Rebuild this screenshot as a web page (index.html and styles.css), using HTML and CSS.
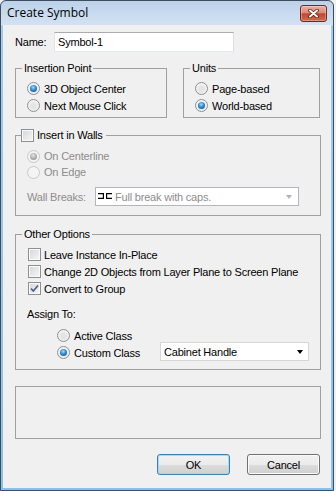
FILE: index.html
```html
<!DOCTYPE html>
<html>
<head>
<meta charset="utf-8">
<meta name="viewport" content="width=device-width, initial-scale=1">
<link rel="stylesheet" href="styles.css">
</head>
<body>
<div class="window">
  <div class="titlebar">
    <span class="title">Create Symbol</span>
    <div class="close">
      <svg width="11" height="9" viewBox="0 0 11 9">
        <path d="M2 1.5 L9 7.5 M9 1.5 L2 7.5" stroke="#5b1d14" stroke-width="3.6" stroke-linecap="round"/>
        <path d="M2 1.5 L9 7.5 M9 1.5 L2 7.5" stroke="#ffffff" stroke-width="2" stroke-linecap="round"/>
      </svg>
    </div>
  </div>

  <div class="client">
    <div class="name-row">
      <span class="name-label">Name:</span>
      <div class="textbox">Symbol-1</div>
    </div>

    <div class="top-groups">
      <fieldset class="group insertion">
        <legend>Insertion Point</legend>
        <div class="option"><span class="radio on"></span>3D Object Center</div>
        <div class="option"><span class="radio"></span>Next Mouse Click</div>
      </fieldset>
      <fieldset class="group units">
        <legend>Units</legend>
        <div class="option"><span class="radio"></span>Page-based</div>
        <div class="option"><span class="radio on"></span>World-based</div>
      </fieldset>
    </div>

    <fieldset class="group walls">
      <legend class="check-legend"><span class="check"></span>Insert in Walls</legend>
      <div class="option disabled short"><span class="radio on"></span>On Centerline</div>
      <div class="option disabled short"><span class="radio"></span>On Edge</div>
      <div class="breaks-row">
        <span class="breaks-label">Wall Breaks:</span>
        <div class="combo combo-disabled">
          <svg class="break-icon" width="14" height="7" viewBox="0 0 14 7">
            <path d="M0 0.6 H5.4 V5.4 H0 M14 0.6 H8.6 V5.4 H14" fill="none" stroke="#000" stroke-width="1.2"/>
          </svg>
          <span class="combo-text">Full break with caps.</span>
          <span class="arrow arrow-gray"></span>
        </div>
      </div>
    </fieldset>

    <fieldset class="group other">
      <legend>Other Options</legend>
      <div class="option boxed"><span class="check"></span>Leave Instance In-Place</div>
      <div class="option boxed"><span class="check"></span>Change 2D Objects from Layer Plane to Screen Plane</div>
      <div class="option boxed"><span class="check checked">
        <svg width="11" height="11" viewBox="0 0 11 11"><path d="M2 5.5 L4.3 8 L9 2.5" fill="none" stroke="#4b5f96" stroke-width="1.7"/></svg>
      </span>Convert to Group</div>
      <div class="assign-label">Assign To:</div>
      <div class="option assign"><span class="radio"></span>Active Class</div>
      <div class="option assign">
        <span class="radio on"></span>
        <span class="class-label">Custom Class</span>
        <div class="combo combo-class">
          <span class="combo-text">Cabinet Handle</span>
          <span class="arrow"></span>
        </div>
      </div>
    </fieldset>

    <div class="empty-box"></div>

    <div class="buttons">
      <div class="btn btn-default">OK</div>
      <div class="btn">Cancel</div>
    </div>
  </div>
</div>
</body>
</html>
```

FILE: styles.css
```css
* {box-sizing: border-box;}

body {
  margin: 0;
  background: #f0f0f0;
  font-family: "Liberation Sans", Arial, sans-serif;
  font-size: 11px;
  color: #000;
}

.window {
  width: 334px;
  height: 491px;
  border: 1px solid #3e4c5b;
  border-radius: 6px 6px 0 0;
  background: linear-gradient(#bcd2ea, #d3e2f2 24px, #9fcdf0 25px, #86c3ee);
  display: flex;
  flex-direction: column;
  overflow: hidden;
}

.titlebar {
  height: 24px;
  display: flex;
  justify-content: space-between;
  align-items: flex-start;
  padding-left: 6px;
}

.title {
  font-family: "Open Sans", "Liberation Sans", sans-serif;
  font-size: 12px;
  line-height: 16px;
  margin-top: 4px;
}

.close {
  width: 27px;
  height: 17px;
  margin: 4px 6px 0 0;
  border: 1px solid #6d2a22;
  border-radius: 3px;
  background: linear-gradient(#eab0a3, #dc8a78 45%, #c4462f 52%, #cf6a50);
  box-shadow: inset 0 0 0 1px rgba(255, 255, 255, 0.3);
  display: flex;
  align-items: center;
  justify-content: center;
}

.client {
  flex: 1;
  margin: 0 2px 2px;
  background: #f0f0f0;
  padding: 7px 10px 0 12px;
  display: flex;
  flex-direction: column;
  letter-spacing: -0.2px;
}

.name-row {
  display: flex;
  align-items: center;
  height: 20px;
}

.name-label {
  width: 39px;
}

.textbox {
  width: 180px;
  height: 20px;
  border: 1px solid;
  border-color: #abadb3 #dbdfe6 #e3e9ef #e2e3ea;
  background: #fff;
  padding-left: 3px;
  display: flex;
  align-items: center;
}

/* group boxes */
.group {
  margin: 0;
  min-width: 0;
  border: 1px solid #a0a0a0;
  padding: 5px 0 3px 6px;
}

.group legend {
  padding: 0 2px;
  line-height: 13px;
}

.top-groups {
  display: flex;
  gap: 16px;
  margin-top: 10px;
}

.insertion {width: 152px;}
.units {width: 137px;}

.option {
  display: flex;
  align-items: center;
  gap: 4px;
  height: 17px;
  margin-left: 5px;
}

.option.short {height: 16px;}
.option.boxed {margin-left: 6px; gap: 3px;}

.disabled {color: #8d8d8d;}

.radio {
  width: 13px;
  height: 13px;
  flex: none;
  border-radius: 50%;
  border: 1px solid #8d8f91;
  background: radial-gradient(circle at 50% 55%, #e4e4e4 30%, #f8f8f8 75%);
  padding: 2px;
}

.radio.on::after {
  content: "";
  display: block;
  width: 7px;
  height: 7px;
  border-radius: 50%;
  background: radial-gradient(circle at 45% 35%, #a9dcfa 0, #2d8ad6 45%, #0c4d8f 100%);
}

.disabled .radio {
  border-color: #c6c8ca;
  background: #f4f4f4;
}

.disabled .radio.on::after {
  background: radial-gradient(circle at 45% 35%, #e6e6e6 0, #b0b0b0 50%, #8e8e8e 100%);
}

.check {
  width: 13px;
  height: 13px;
  flex: none;
  border: 1px solid #8e8f8f;
  background: linear-gradient(135deg, #d3d6da, #f7f7f7);
  box-shadow: inset 0 0 0 1px #fafafa;
  display: flex;
  align-items: center;
  justify-content: center;
}

.check.checked svg {display: block;}

.group .check-legend {
  display: flex;
  align-items: center;
  gap: 3px;
  line-height: 15px;
  margin-left: -1px;
  padding: 0 3px 0 0;
}

.walls {
  margin-top: 10px;
  padding-bottom: 9px;
}

.breaks-row {
  display: flex;
  align-items: center;
  margin: 7px 0 0 5px;
  color: #8d8d8d;
}

.breaks-label {width: 68px;}

.combo {
  height: 19px;
  display: flex;
  align-items: center;
  background: #fff;
}

.combo-disabled {
  width: 204px;
  border: 1px solid #b3b7bc;
  padding: 0 6px 0 2px;
}

.break-icon {margin-right: 3px;}

.combo-text {flex: 1;}

.arrow {
  width: 0;
  height: 0;
  border-left: 3.5px solid transparent;
  border-right: 3.5px solid transparent;
  border-top: 4px solid #000;
}

.arrow-gray {border-top-color: #b4b4b4;}

.other {margin-top: 12px; padding-bottom: 8px;}

.other legend {line-height: 13px;}

.assign-label {
  margin: 10px 0 0 5px;
  line-height: 14px;
}

.option.assign {margin-left: 35px;}
.assign-label + .option {margin-top: 6px;}

.class-label {width: 82px;}

.combo-class {
  width: 149px;
  align-self: flex-start;
  margin-top: -2px;
  border: 1px solid #d6d6d6;
  padding: 0 5px 0 3px;
}

.empty-box {
  margin-top: 16px;
  height: 53px;
  border: 1px solid #a0a0a0;
}

.buttons {
  display: flex;
  justify-content: flex-end;
  gap: 17px;
  margin-top: 15px;
  padding-right: 1px;
}

.btn {
  width: 73px;
  height: 21px;
  border: 1px solid #707070;
  border-radius: 3px;
  background: linear-gradient(#f2f2f2, #ebebeb 50%, #dddddd 50%, #cfcfcf);
  box-shadow: inset 0 0 0 1px #fbfbfb;
  display: flex;
  align-items: center;
  justify-content: center;
}

.btn-default {
  border-color: #3c7fb1;
  box-shadow: inset 0 0 0 1px #9edcf7;
}
```
